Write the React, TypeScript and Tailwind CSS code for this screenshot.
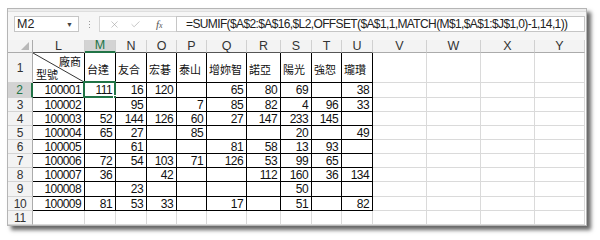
import { Check, X } from 'lucide-react'

const NUM_FONT = "font-['Liberation_Sans',sans-serif]"
const CJK_FONT = "font-['Noto_Sans_CJK_TC','Noto_Sans_CJK_SC',sans-serif]"

const cols = ['L', 'M', 'N', 'O', 'P', 'Q', 'R', 'S', 'T', 'U', 'V', 'W', 'X', 'Y']
const vendors = ['台達', '友合', '宏碁', '泰山', '增妳智', '諾亞', '陽光', '強恕', '瓏瓚']

// model, then M..U values ('' = empty)
const data: (string | number)[][] = [
  ['100001', 111, 16, 120, '', 65, 80, 69, '', 38],
  ['100002', '', 95, '', 7, 85, 82, 4, 96, 33],
  ['100003', 52, 144, 126, 60, 27, 147, 233, 145, ''],
  ['100004', 65, 27, '', 85, '', '', 20, '', 49],
  ['100005', '', 61, '', '', 81, 58, 13, 93, ''],
  ['100006', 72, 54, 103, 71, 126, 53, 99, 65, ''],
  ['100007', 36, '', 42, '', '', 112, 160, 36, 134],
  ['100008', '', 23, '', '', '', '', 50, '', ''],
  ['100009', 81, 53, 33, '', 17, '', 51, '', 82],
]

const rowHeights = ['h-[15px]', 'h-[14px]', 'h-[14px]', 'h-[14px]', 'h-[14px]', 'h-[14px]', 'h-[14px]', 'h-[15px]', 'h-[14px]', 'h-[14px]']

const gridCols =
  'grid grid-cols-[25px_52px_31px_31px_30px_30px_40px_34px_31px_30px_31px_54px_54px_54px_50px]'

function RowHeader({ n, selected, h }: { n: number; selected?: boolean; h: string }) {
  return (
    <div
      className={`${h} flex items-center justify-center border-b border-b-[#d4d4d4] text-[12px] tracking-[-0.3px] leading-none ${NUM_FONT} ${
        selected
          ? 'bg-[#d3d3d3] text-[#217346] border-r-2 border-r-[#217346]'
          : 'bg-[#f3f3f3] text-[#333] border-r border-r-[#ababab]'
      }`}
    >
      {n}
    </div>
  )
}

function Cell({ inTable, h, children, selected }: { inTable: boolean; h: string; children?: React.ReactNode; selected?: boolean }) {
  return (
    <div
      className={`${h} relative flex items-center justify-end pr-[3px] border-r border-b bg-white text-[12px] tracking-[-0.6px] leading-none text-[#111] ${NUM_FONT} ${
        inTable ? 'border-black' : 'border-[#dadada]'
      }`}
    >
      {children}
      {selected && (
        <>
          <div className="absolute -left-[2px] -top-[2px] -right-[1px] -bottom-[1px] border-2 border-[#217346]" />
          <div className="absolute -right-[3px] -bottom-[3px] w-[5px] h-[5px] bg-[#217346] border border-white" />
        </>
      )}
    </div>
  )
}

export default function App() {
  return (
    <div className="w-[600px] h-[240px] bg-white overflow-hidden">
      <div className="ml-[7px] mt-[8px] w-[580px] h-[218px] border border-[#b5b5b5] bg-[#f6f6f6] shadow-[4px_4px_4px_rgba(0,0,0,0.6)] flex flex-col">
        {/* formula bar */}
        <div className="h-[31px] flex flex-col">
          <div className="h-[3px] border-b border-[#dedede] bg-[#ececec]" />
          <div className="flex items-start mt-[4px]">
            <div className="shrink-0 ml-[6px] w-[65px] h-[16px] bg-white border border-[#c6c6c6] flex items-center justify-between pl-[2px] pr-[5px]">
              <span className="text-[12.5px] leading-none text-[#222] font-['Liberation_Sans',sans-serif]">M2</span>
              <span className="text-[7px] leading-none text-[#444]">▼</span>
            </div>
            <div className="shrink-0 w-[20px] h-[16px] flex flex-col items-center justify-center gap-[2px]">
              <span className="w-[1px] h-[1px] bg-[#9a9a9a]" />
              <span className="w-[1px] h-[1px] bg-[#9a9a9a]" />
              <span className="w-[1px] h-[1px] bg-[#9a9a9a]" />
            </div>
            <div className="shrink-0 w-[77px] h-[16px] bg-white border border-[#d4d4d4] border-r-0 flex items-center">
              <X size={11} strokeWidth={1.2} className="ml-[9px] text-[#9a9a9a]" />
              <Check size={11} strokeWidth={1.2} className="ml-[10px] text-[#9a9a9a]" />
              <span className="ml-[15px] text-[11px] italic leading-none text-[#555] font-['Liberation_Serif',serif]">
                f<span className="text-[8px]">x</span>
              </span>
            </div>
            <div className="flex-1 min-w-0 overflow-hidden h-[16px] bg-white border border-[#c6c6c6] flex items-center pl-[9px] mr-[1px]">
              <span className={`whitespace-nowrap text-[12px] tracking-[-0.62px] leading-none text-[#222] ${NUM_FONT}`}>
                =SUMIF($A$2:$A$16,$L2,OFFSET($A$1,1,MATCH(M$1,$A$1:$J$1,0)-1,14,1))
              </span>
            </div>
          </div>
        </div>

        {/* sheet */}
        <div className={`${gridCols} bg-white`}>
          {/* column headers */}
          <div className="h-[13px] bg-[#f3f3f3] border-r border-b border-[#ababab] relative flex items-end justify-end pr-[3px] pb-[2px]">
            <span className="w-0 h-0 border-l-[8px] border-l-transparent border-b-[8px] border-b-[#b8b8b8]" />
          </div>
          {cols.map((c, i) => (
            <div
              key={c}
              className={`h-[13px] flex items-center justify-center text-[12.5px] leading-none ${NUM_FONT} border-r border-r-[#d0d0d0] ${
                c === 'M'
                  ? 'bg-[#d3d3d3] text-[#217346] border-b-2 border-b-[#217346]'
                  : `bg-[#f3f3f3] text-[#333] border-b ${i < 10 ? 'border-b-[#555]' : 'border-b-[#ababab]'}`
              }`}
            >
              {c}
            </div>
          ))}

          {/* row 1 */}
          <RowHeader n={1} h="h-[30px]" />
          <div className={`h-[30px] relative border-r border-b border-black bg-white flex flex-col justify-between px-[3px] py-[1px] text-[11px] leading-none text-[#111] ${CJK_FONT}`}>
            <svg className="absolute inset-0" width="51" height="29" viewBox="0 0 51 29">
              <line x1="0" y1="0" x2="51" y2="29" stroke="#000" strokeWidth="0.8" />
            </svg>
            <span className="self-end mt-[2px]">廠商</span>
            <span className="self-start mb-[1px]">型號</span>
          </div>
          {vendors.map((v) => (
            <div
              key={v}
              className={`h-[30px] flex items-center pl-[2px] pt-[3px] border-r border-b border-black bg-white text-[11px] leading-none text-[#111] whitespace-nowrap overflow-hidden ${CJK_FONT}`}
            >
              {v}
            </div>
          ))}
          {[0, 1, 2, 3].map((k) => (
            <div key={k} className="h-[30px] border-r border-b border-[#dadada] bg-white" />
          ))}

          {/* rows 2-10 */}
          {data.map((row, r) => {
            const h = rowHeights[r]
            return [
              <RowHeader key={`h${r}`} n={r + 2} h={h} selected={r === 0} />,
              ...row.map((v, c) => (
                <Cell key={`${r}-${c}`} inTable h={h} selected={r === 0 && c === 1}>
                  {v}
                </Cell>
              )),
              ...[0, 1, 2, 3].map((k) => <Cell key={`${r}-e${k}`} inTable={false} h={h} />),
            ]
          })}

          {/* row 11 */}
          <RowHeader n={11} h="h-[14px]" />
          {cols.map((c) => (
            <Cell key={`r11${c}`} inTable={false} h="h-[14px]" />
          ))}
        </div>
      </div>
    </div>
  )
}
